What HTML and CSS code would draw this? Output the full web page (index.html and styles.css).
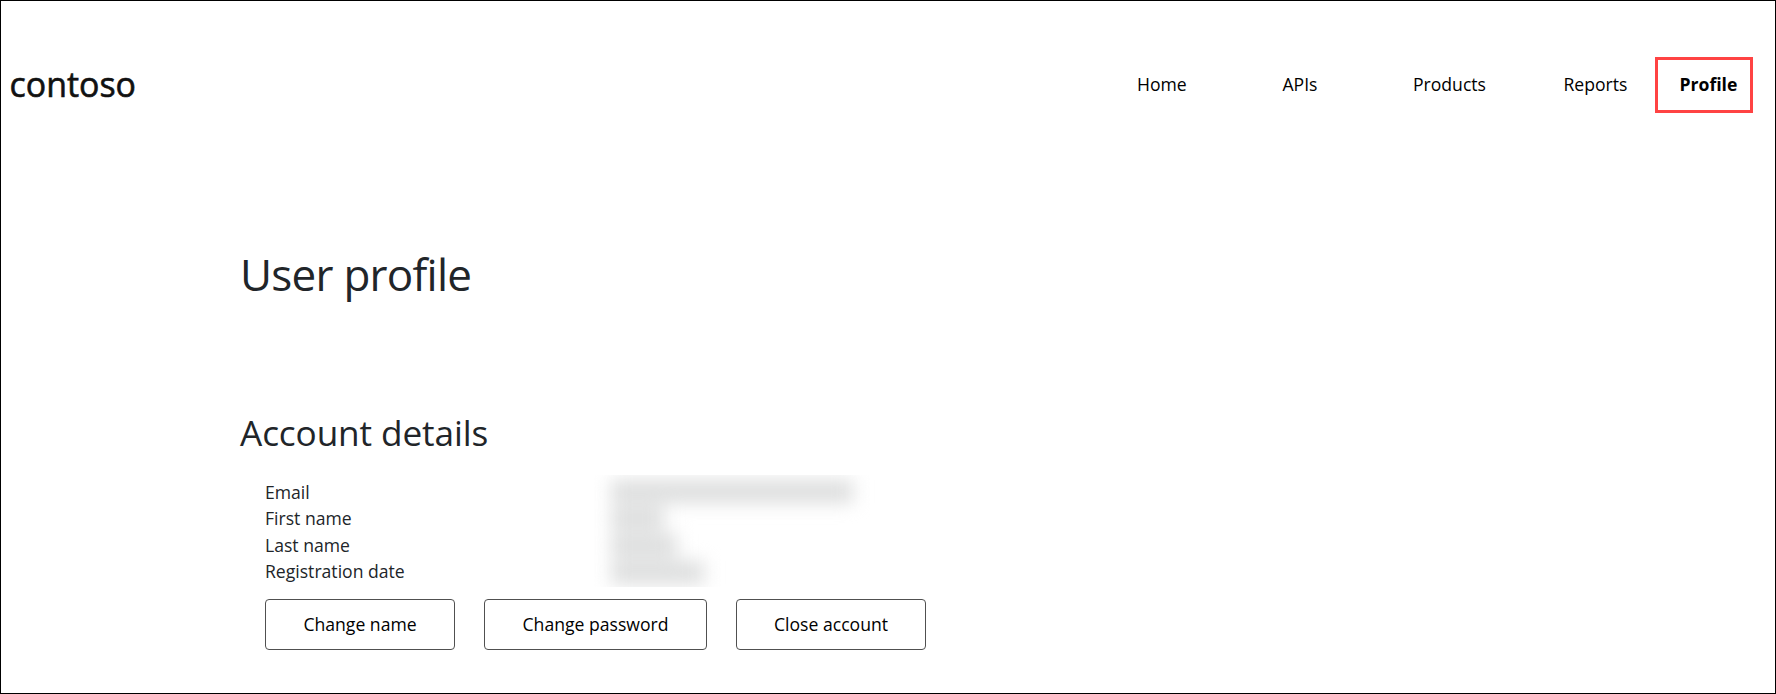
FILE: index.html
```html
<!DOCTYPE html>
<html lang="en">
<head>
<meta charset="utf-8">
<title>User profile</title>
<link rel="stylesheet" href="styles.css">
</head>
<body>
<div class="page">
  <header class="header">
    <svg class="logo" width="140" height="56" viewBox="0 0 140 56" role="img" aria-label="contoso">
      <text class="logo-text" x="0.5" y="39.5" textLength="126.5" lengthAdjust="spacingAndGlyphs">contoso</text>
    </svg>
    <nav class="nav">
      <a>Home</a>
      <a>APIs</a>
      <a>Products</a>
      <a>Reports</a>
      <a class="current">Profile</a>
    </nav>
  </header>
  <main class="content">
    <h1>User profile</h1>
    <h2>Account details</h2>
    <section class="account">
      <div class="details">
        <div class="labels">
          <div>Email</div>
          <div>First name</div>
          <div>Last name</div>
          <div>Registration date</div>
        </div>
        <div class="redacted">
          <div class="smudges">
            <span class="smudge email"></span>
            <span class="smudge first"></span>
            <span class="smudge last"></span>
            <span class="smudge date"></span>
          </div>
        </div>
      </div>
      <div class="actions">
        <button>Change name</button>
        <button class="wide">Change password</button>
        <button>Close account</button>
      </div>
    </section>
  </main>
</div>
</body>
</html>
```
FILE: styles.css
```css
* { box-sizing: border-box; }
body {
  margin: 0;
  background: #fff;
  color: #212529;
  font: 17.6px/26.4px "Open Sans", sans-serif;
}
.page {
  height: 694px;
  border: 1px solid #000;
  overflow: hidden;
}
.header {
  display: flex;
  justify-content: space-between;
  align-items: center;
  height: 56px;
  margin: 56px 22px 0 8px;
}
.logo { display: block; }
.logo-text {
  font: 500 35px "Open Sans", sans-serif;
  fill: #111;
  stroke: #111;
  stroke-width: 0.6px;
}
.nav {
  display: grid;
  grid-template-columns: 145.5px 130.5px 150.5px 91.5px 98px;
  align-items: center;
  color: #000;
}
.nav a:not(.current) { padding-bottom: 2px; }
.current {
  height: 56px;
  padding-left: 21.5px;
  border: 3px solid #ff4343;
  font-weight: 700;
  line-height: 49px;
}
.content { padding: 135px 0 0 239px; }
h1, h2 { margin: 0; font-weight: 400; }
h1 { font-size: 44px; line-height: 53px; letter-spacing: -0.75px; }
h2 { margin-top: 110px; font-size: 35.2px; line-height: 42px; letter-spacing: -0.12px; }
.account { padding: 22px 0 0 25px; }
.details { display: flex; height: 113px; }
.labels { width: 328px; padding-top: 4px; }
.redacted {
  width: 290px;
  height: 112px;
  overflow: hidden;
}
.smudges {
  display: flex;
  flex-direction: column;
  gap: 4px;
  padding: 5px 0 0 18px;
  filter: blur(9px);
}
.smudge {
  height: 23px;
  background: #dddede;
}
.email { width: 242px; }
.first { width: 53px; }
.last { width: 66px; }
.date { width: 93px; }
.actions { display: flex; gap: 29px; margin-top: 11px; }
button {
  width: 190px;
  height: 51px;
  padding: 0 0 1px;
  border: 1px solid #505050;
  border-radius: 4px;
  background: #fff;
  color: #000;
  font: inherit;
}
.wide { width: 223px; }
```
